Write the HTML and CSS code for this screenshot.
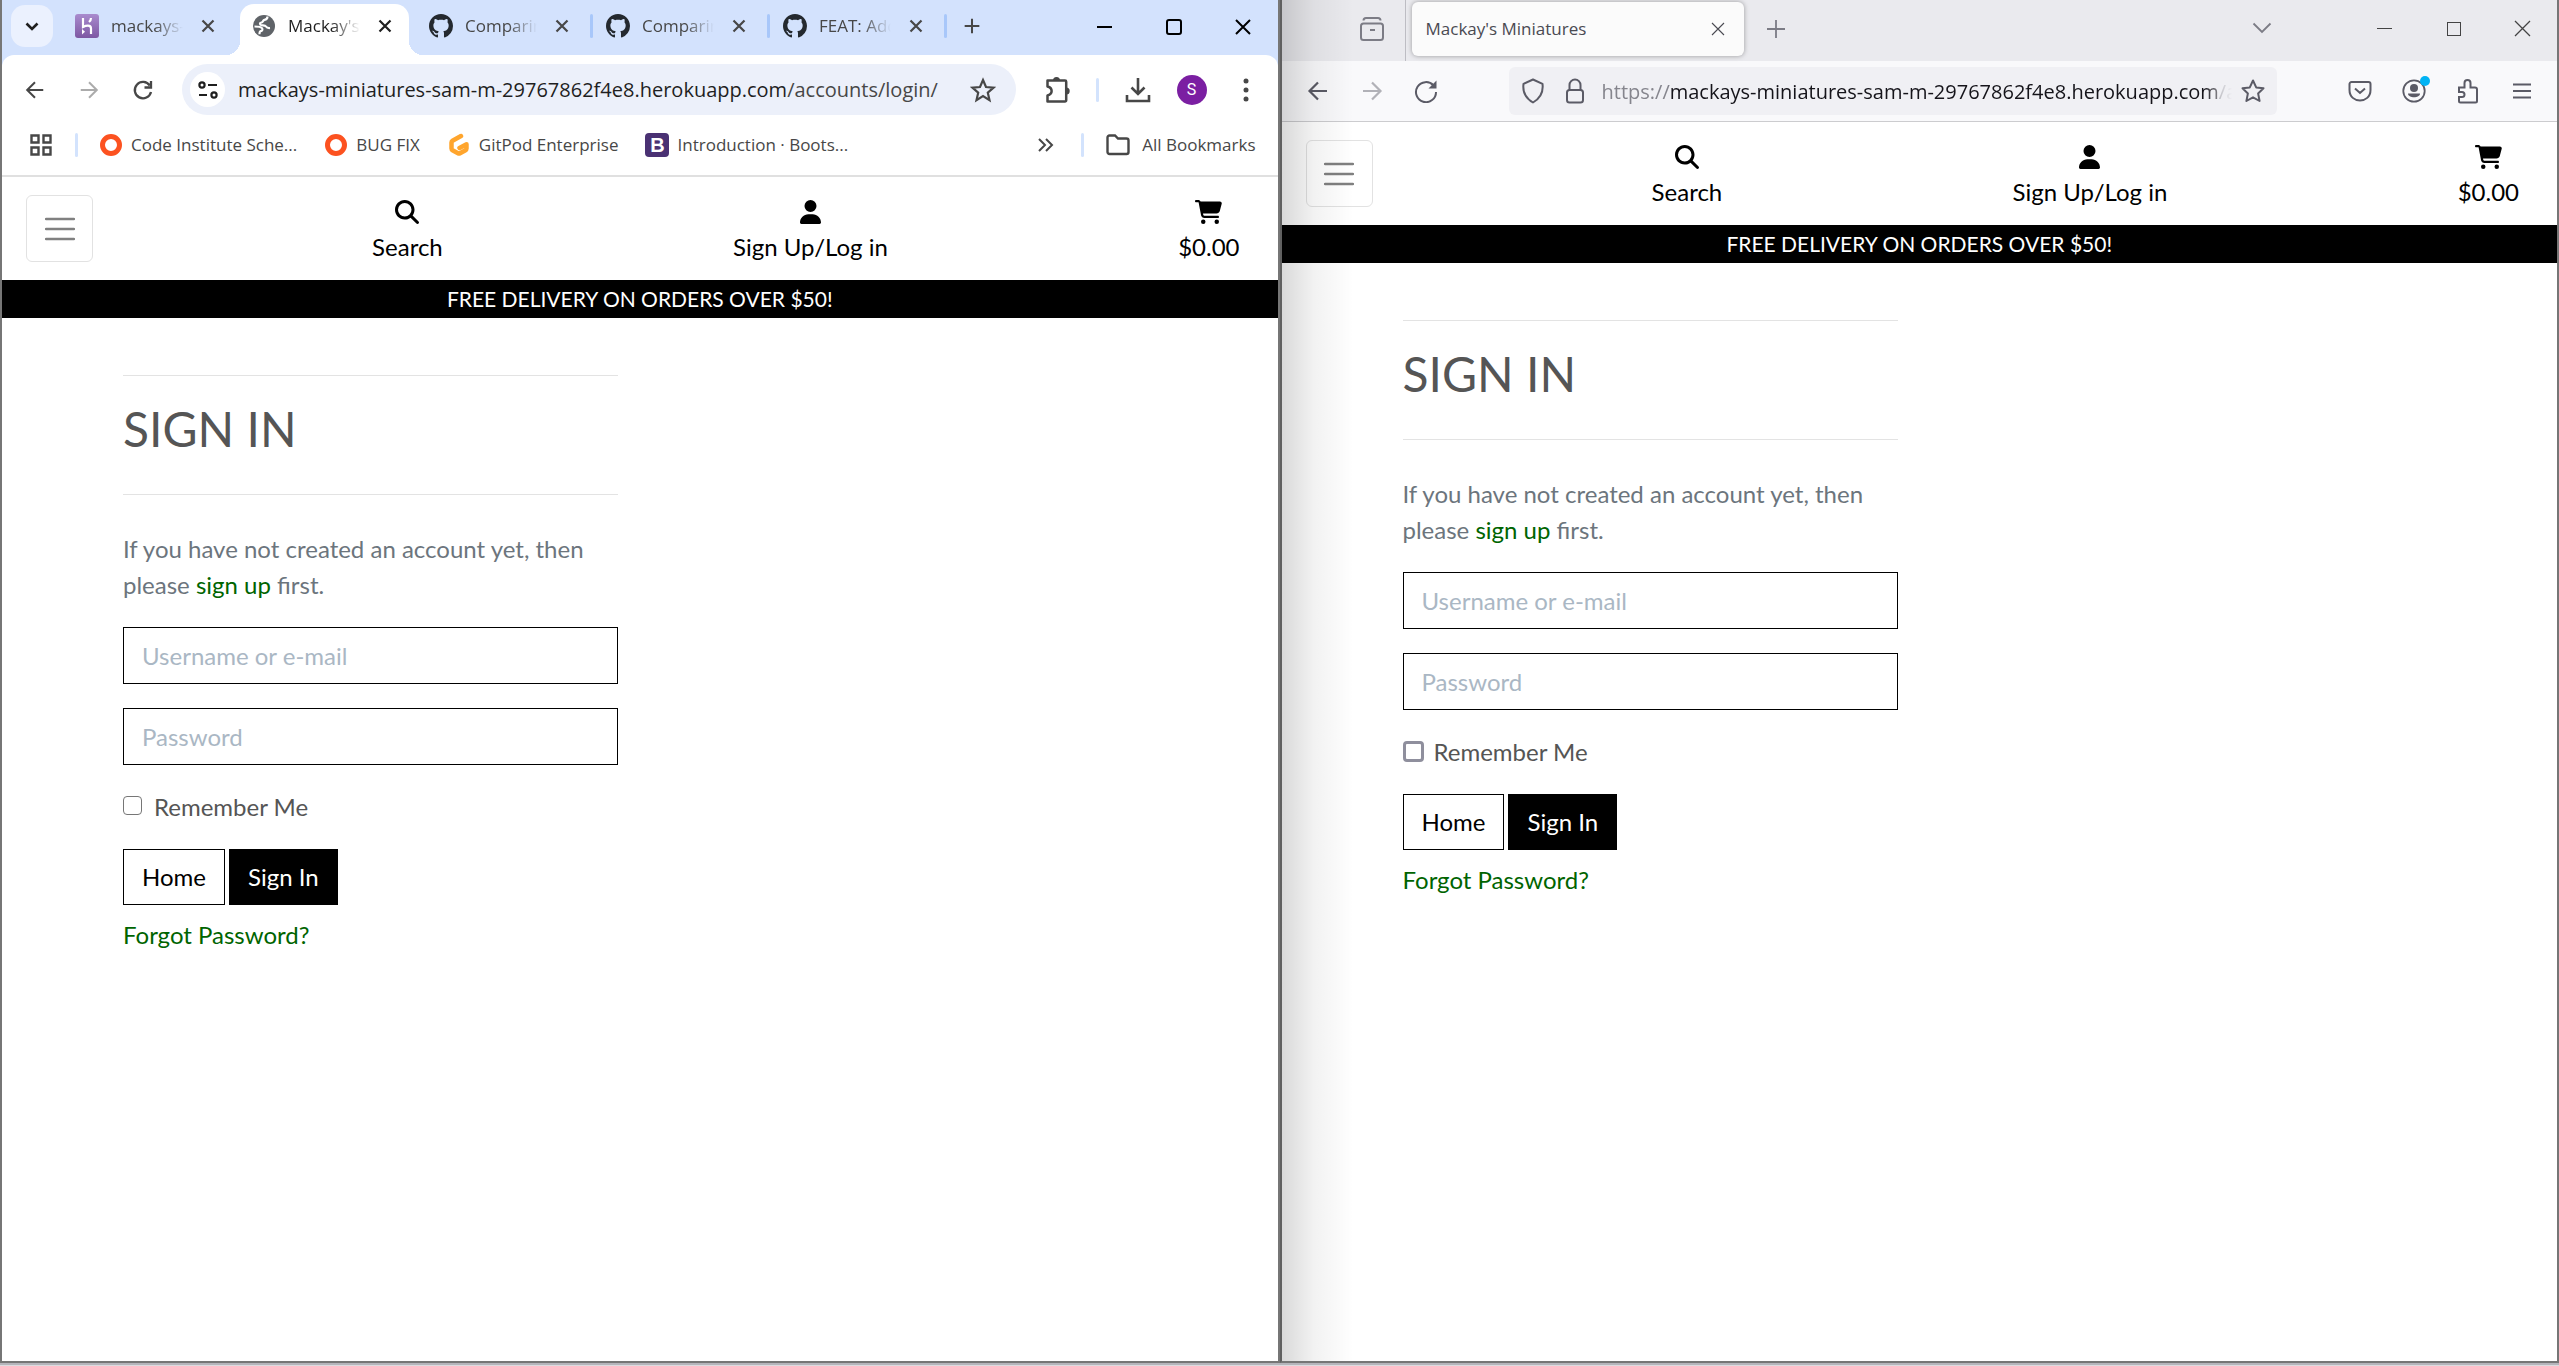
FILE: index.html
```html
<!DOCTYPE html>
<html lang="en">
<head>
<meta charset="utf-8">
<title>Mackay's Miniatures</title>
<link rel="stylesheet" href="styles.css">
</head>
<body>
<svg class="sprite" aria-hidden="true">
  <symbol id="close" viewBox="0 0 24 24"><path d="M6 6l12 12M18 6L6 18" fill="none" stroke="currentColor" stroke-width="2.4"/></symbol>
  <symbol id="close-thin" viewBox="0 0 24 24"><path d="M4 4l16 16M20 4L4 20" fill="none" stroke="currentColor" stroke-width="1.5"/></symbol>
  <symbol id="plus" viewBox="0 0 24 24"><path d="M12 4v16M4 12h16" fill="none" stroke="currentColor" stroke-width="2.2"/></symbol>
  <symbol id="github" viewBox="0 0 16 16"><path fill="#24292f" d="M8 0C3.58 0 0 3.58 0 8c0 3.54 2.29 6.53 5.47 7.59.4.07.55-.17.55-.38 0-.19-.01-.82-.01-1.49-2.01.37-2.53-.49-2.69-.94-.09-.23-.48-.94-.82-1.13-.28-.15-.68-.52-.01-.53.63-.01 1.08.58 1.23.82.72 1.21 1.87.87 2.33.66.07-.52.28-.87.51-1.07-1.78-.2-3.64-.89-3.64-3.95 0-.87.31-1.59.82-2.15-.08-.2-.36-1.02.08-2.12 0 0 .67-.21 2.2.82.64-.18 1.32-.27 2-.27s1.36.09 2 .27c1.53-1.04 2.2-.82 2.2-.82.44 1.1.16 1.92.08 2.12.51.56.82 1.27.82 2.15 0 3.07-1.87 3.75-3.65 3.95.29.25.54.73.54 1.48 0 1.07-.01 1.93-.01 2.2 0 .21.15.46.55.38A8.01 8.01 0 0 0 16 8c0-4.42-3.58-8-8-8z"/></symbol>
  <symbol id="back" viewBox="0 0 24 24"><path d="M21 12H4M12 3.5L3.5 12l8.500 8.500" fill="none" stroke="currentColor" stroke-width="2.2"/></symbol>
  <symbol id="forward" viewBox="0 0 24 24"><path d="M3 12h17M12 3.500L20.500 12 12 20.500" fill="none" stroke="currentColor" stroke-width="2.200"/></symbol>
  <symbol id="ring" viewBox="0 0 24 24"><circle cx="12" cy="12" r="8.500" fill="#fff" stroke="#fc5220" stroke-width="5"/></symbol>
  <symbol id="search" viewBox="0 0 512 512"><path d="M416 208c0 45.9-14.9 88.3-40 122.7L502.600 457.400c12.500 12.500 12.500 32.800 0 45.300s-32.800 12.500-45.300 0L330.700 376c-34.400 25.200-76.800 40-122.700 40C93.100 416 0 322.900 0 208S93.100 0 208 0S416 93.100 416 208zM208 352a144 144 0 1 0 0-288 144 144 0 1 0 0 288z"/></symbol>
  <symbol id="user" viewBox="0 0 448 512"><path d="M224 256A128 128 0 1 0 224 0a128 128 0 1 0 0 256zm-45.700 48C79.800 304 0 383.800 0 482.300C0 498.700 13.300 512 29.700 512H418.300c16.400 0 29.700-13.300 29.700-29.700C448 383.800 368.200 304 269.700 304H178.300z"/></symbol>
  <symbol id="cart" viewBox="0 0 576 512"><path d="M0 24C0 10.700 10.700 0 24 0H69.500c22 0 41.500 12.800 50.600 32h411c26.300 0 45.500 25 38.600 50.400l-41 152.300c-8.500 31.400-37 53.300-69.500 53.300H170.700l5.400 28.500c2.200 11.300 12.100 19.500 23.600 19.500H488c13.300 0 24 10.700 24 24s-10.700 24-24 24H199.700c-34.600 0-64.300-24.600-70.700-58.500L77.400 54.500c-.7-3.800-4-6.500-7.900-6.500H24C10.700 48 0 37.300 0 24zM128 464a48 48 0 1 1 96 0 48 48 0 1 1 -96 0zm336-48a48 48 0 1 1 0 96 48 48 0 1 1 0-96z"/></symbol>
  <symbol id="bars" viewBox="0 0 30 30"><path d="M1 5h28M1 15h28M1 25h28" stroke="#808080" stroke-width="2.500" stroke-linecap="round"/></symbol>
</svg>

<div class="desktop">
  <section class="window chrome" aria-label="Chrome window">
    <header class="browser">
      <div class="strip">
        <button class="tab-search" aria-label="Search tabs"><svg width="24" height="24" viewBox="0 0 24 24"><path d="M6.500 9.500L12 15l5.500-5.500" fill="none" stroke="#1f1f1f" stroke-width="2.600"/></svg></button>
        <div class="tabs">
          <div class="tab">
            <svg class="favicon" viewBox="0 0 24 24"><defs><linearGradient id="hk" x2="0" y2="1"><stop offset="0" stop-color="#a98bce"/><stop offset="1" stop-color="#7d58a3"/></linearGradient></defs><rect width="24" height="24" rx="3" fill="url(#hk)"/><path d="M8 4v9c3-1.500 8-2.500 8 1.500V20M16 4c0 1.500-.8 3-2 4" fill="none" stroke="#fff" stroke-width="2.200"/><path d="M7 15l3 2.700L7 20.500z" fill="#fff"/></svg>
            <span class="tab-title">mackays-miniatures</span>
            <button class="icon-sm" aria-label="Close tab"><svg width="22" height="22"><use href="#close"/></svg></button>
          </div>
          <div class="tab active">
            <svg class="favicon" viewBox="0 0 24 24"><circle cx="12" cy="12" r="11" fill="#5f6368"/><path d="M15.500 2.500c0 2.500-1 3-3 3.300-1.800.3-1.300 2.500-3 2.700-1.500.2-2 1.200-1 2.300 1 1 4.500.2 5.500 1.700.8 1.300 2 1.700 4 1.500M2.500 12.500c3 0 6.500.3 7.500 1.700 1 1.300.2 2.800-1.300 3-1 .2-1.200 1.500-1.200 3" fill="none" stroke="#fff" stroke-width="2.200"/></svg>
            <span class="tab-title">Mackay's Miniatures</span>
            <button class="icon-sm" aria-label="Close tab"><svg width="22" height="22"><use href="#close"/></svg></button>
          </div>
          <div class="tab split">
            <svg class="favicon"><use href="#github"/></svg>
            <span class="tab-title">Comparing changes</span>
            <button class="icon-sm" aria-label="Close tab"><svg width="22" height="22"><use href="#close"/></svg></button>
          </div>
          <div class="tab split">
            <svg class="favicon"><use href="#github"/></svg>
            <span class="tab-title">Comparing changes</span>
            <button class="icon-sm" aria-label="Close tab"><svg width="22" height="22"><use href="#close"/></svg></button>
          </div>
          <div class="tab split">
            <svg class="favicon"><use href="#github"/></svg>
            <span class="tab-title">FEAT: Add feature</span>
            <button class="icon-sm" aria-label="Close tab"><svg width="22" height="22"><use href="#close"/></svg></button>
          </div>
        </div>
        <button class="icon-sm new-tab" aria-label="New tab"><svg width="22" height="22"><use href="#plus"/></svg></button>
        <div class="controls">
          <button aria-label="Minimize"><svg width="16" height="16" viewBox="0 0 16 16"><path d="M0 8h15" stroke="#000" stroke-width="2"/></svg></button>
          <button aria-label="Maximize"><svg width="16" height="16" viewBox="0 0 16 16"><rect x="1" y="1" width="14" height="14" rx="2" fill="none" stroke="#000" stroke-width="2"/></svg></button>
          <button aria-label="Close"><svg width="16" height="16" viewBox="0 0 16 16"><path d="M1 1l14 14M15 1L1 15" stroke="#000" stroke-width="2"/></svg></button>
        </div>
      </div>
      <div class="panel">
        <div class="toolbar">
          <button class="tool" aria-label="Back"><svg width="22" height="22"><use href="#back"/></svg></button>
          <button class="tool dim" aria-label="Forward"><svg width="22" height="22"><use href="#forward"/></svg></button>
          <button class="tool" aria-label="Reload"><svg width="24" height="24" viewBox="0 0 24 24"><path d="M18.800 7.500A8.200 8.200 0 1 0 20 14M20 3v6.500h-6.500" fill="none" stroke="currentColor" stroke-width="2.300"/></svg></button>
          <div class="omnibox">
            <button class="site-info" aria-label="Site information"><svg width="20" height="20" viewBox="0 0 20 20" fill="none" stroke="#1f1f1f" stroke-width="2.200"><circle cx="4" cy="5" r="2.600"/><path d="M10 5h9M1 15h8"/><circle cx="16" cy="15" r="2.600"/></svg></button>
            <div class="address" role="textbox" aria-label="Address">mackays-miniatures-sam-m-29767862f4e8.herokuapp.com<span class="path">/accounts/login/</span></div>
            <button class="star" aria-label="Bookmark"><svg width="26" height="26" viewBox="0 0 26 26"><path d="M13 3l3 7 7.500.7-5.700 5 1.700 7.400-6.500-4-6.500 4 1.700-7.400-5.700-5L10 10z" fill="none" stroke="#474747" stroke-width="2.200"/></svg></button>
          </div>
          <button class="tool puzzle" aria-label="Extensions"><svg width="26" height="28" viewBox="0 0 26 28"><path d="M4 4.500h17a1.200 1.200 0 0 1 1.200 1.200v18.600a1.200 1.200 0 0 1-1.200 1.200H3.500v-6c5.500-1.500 5.500-7.500 0-9V4.500z" fill="none" stroke="currentColor" stroke-width="2.500" stroke-linejoin="round"/><path d="M9 4.500a3.500 3.500 0 0 1 7 0zM22.200 11.500a3.500 3.500 0 0 1 0 7z" fill="currentColor"/></svg></button>
          <i class="bar"></i>
          <button class="tool" aria-label="Downloads"><svg width="26" height="26" viewBox="0 0 26 26"><path d="M13 1v15M6.500 10.500L13 17l6.500-6.500M2 18v6h22v-6" fill="none" stroke="currentColor" stroke-width="2.600"/></svg></button>
          <button class="tool" aria-label="Profile"><span class="avatar">S</span></button>
          <button class="tool" aria-label="Menu"><svg width="6" height="24" viewBox="0 0 6 24" fill="currentColor"><circle cx="3" cy="3" r="2.500"/><circle cx="3" cy="12" r="2.500"/><circle cx="3" cy="21" r="2.500"/></svg></button>
        </div>
        <nav class="bookmarks" aria-label="Bookmarks">
          <button class="apps" aria-label="Apps"><svg width="22" height="22" viewBox="0 0 22 22"><path d="M1.500 1.500h7v7h-7zM13.500 1.500h7v7h-7zM1.500 13.500h7v7h-7zM13.500 13.500h7v7h-7z" fill="none" stroke="#474747" stroke-width="2.400"/></svg></button>
          <i class="bar"></i>
          <a href="#"><svg width="24" height="24"><use href="#ring"/></svg>Code Institute Sche...</a>
          <a href="#"><svg width="24" height="24"><use href="#ring"/></svg>BUG FIX</a>
          <a href="#"><svg width="24" height="24" viewBox="0 0 24 24"><path d="M14 3L5.500 7.800a2 2 0 0 0-1 1.700v6a2 2 0 0 0 1 1.700l5.500 3.100a2 2 0 0 0 2 0l5.500-3.100a2 2 0 0 0 1-1.700v-4.200L12.500 15" fill="none" stroke="#ffa52d" stroke-width="4.500" stroke-linecap="round" stroke-linejoin="round"/></svg>GitPod Enterprise</a>
          <a href="#"><span class="bs">B</span>Introduction · Boots...</a>
          <button class="more" aria-label="More bookmarks"><svg width="16" height="14" viewBox="0 0 16 14"><path d="M1 1l6 6-6 6M8 1l6 6-6 6" fill="none" stroke="#474747" stroke-width="2"/></svg></button>
          <i class="bar"></i>
          <a href="#"><svg width="24" height="22" viewBox="0 0 24 22"><path d="M1.500 3.500a2 2 0 0 1 2-2H9l3 3h8.500a2 2 0 0 1 2 2v11.500a2 2 0 0 1-2 2h-17a2 2 0 0 1-2-2z" fill="none" stroke="#474747" stroke-width="2.400"/></svg>All Bookmarks</a>
        </nav>
      </div>
    </header>
    <main class="site">
      <nav class="site-nav" aria-label="Site">
        <button class="toggler" aria-label="Toggle navigation"><svg width="30" height="30"><use href="#bars"/></svg></button>
        <ul class="links">
          <li><a href="#"><svg width="24" height="24"><use href="#search"/></svg>Search</a></li>
          <li><a href="#"><svg width="21" height="24"><use href="#user"/></svg>Sign Up/Log in</a></li>
          <li><a href="#"><svg width="27" height="24"><use href="#cart"/></svg>$0.00</a></li>
        </ul>
      </nav>
      <p class="banner">FREE DELIVERY ON ORDERS OVER $50!</p>
      <form class="signin">
        <hr>
        <h1>SIGN IN</h1>
        <hr>
        <p class="intro">If you have not created an account yet, then please <a href="#">sign up</a> first.</p>
        <input class="field" type="text" placeholder="Username or e-mail" aria-label="Username or e-mail">
        <input class="field" type="password" placeholder="Password" aria-label="Password">
        <label class="remember"><input type="checkbox">Remember Me</label>
        <div class="actions">
          <a class="btn" href="#">Home</a>
          <button class="btn primary" type="button">Sign In</button>
        </div>
        <a class="forgot" href="#">Forgot Password?</a>
      </form>
    </main>
  </section>

  <section class="window firefox" aria-label="Firefox window">
    <header class="browser">
      <div class="strip">
        <button class="archive" aria-label="Recent browsing"><svg width="24" height="24" viewBox="0 0 24 24"><path d="M3.500 3.500c0-1.500 1-2.500 2.500-2.500h12c1.500 0 2.500 1 2.500 2.500M10 13h5" fill="none" stroke="currentColor" stroke-width="2"/><rect x="1" y="6.500" width="22" height="16.500" rx="2.500" fill="none" stroke="currentColor" stroke-width="2"/></svg></button>
        <div class="tab active">
          <span class="tab-title">Mackay's Miniatures</span>
          <button class="icon-sm" aria-label="Close tab"><svg width="18" height="18"><use href="#close-thin"/></svg></button>
        </div>
        <button class="icon-sm new-tab" aria-label="New tab"><svg width="20" height="20" viewBox="0 0 20 20"><path d="M10 1v18M1 10h18" stroke="currentColor" stroke-width="1.800"/></svg></button>
        <button class="list" aria-label="List all tabs"><svg width="20" height="12" viewBox="0 0 20 12"><path d="M1.500 1.500L10 10l8.500-8.500" fill="none" stroke="currentColor" stroke-width="1.800"/></svg></button>
        <div class="controls">
          <button aria-label="Minimize"><svg width="16" height="16" viewBox="0 0 16 16"><path d="M0 7.500h15" stroke="#444" stroke-width="1"/></svg></button>
          <button aria-label="Maximize"><svg width="16" height="16" viewBox="0 0 16 16"><rect x="1.500" y="1.500" width="13" height="13" fill="none" stroke="#444" stroke-width="1"/></svg></button>
          <button aria-label="Close"><svg width="17" height="17" viewBox="0 0 17 17"><path d="M1 1l15 15M16 1L1 16" stroke="#444" stroke-width="1.300"/></svg></button>
        </div>
      </div>
      <div class="toolbar">
        <button class="tool" aria-label="Back"><svg width="24" height="24"><use href="#back"/></svg></button>
        <button class="tool dim" aria-label="Forward"><svg width="24" height="24"><use href="#forward"/></svg></button>
        <button class="tool" aria-label="Reload"><svg width="24" height="24" viewBox="0 0 24 24"><path d="M19.500 6.500A10 10 0 1 0 22 13" fill="none" stroke="currentColor" stroke-width="2"/><path d="M22.500 1.500v8h-8z" fill="currentColor"/></svg></button>
        <div class="urlbar">
          <svg width="24" height="26" viewBox="0 0 24 26"><path d="M12 1.500l9.500 4.300c1 8-2 14.500-9.500 18.700C4.500 20.300 1.500 13.800 2.500 5.800z" fill="none" stroke="#5b5b66" stroke-width="2" stroke-linejoin="round"/></svg>
          <svg width="20" height="26" viewBox="0 0 20 26"><path d="M4.500 12V7a5.500 5.500 0 0 1 11 0v5" fill="none" stroke="#5b5b66" stroke-width="2"/><rect x="2" y="12" width="16" height="12.500" rx="2.500" fill="none" stroke="#5b5b66" stroke-width="2"/></svg>
          <div class="address" role="textbox" aria-label="Address"><span class="path">https://</span>mackays-miniatures-sam-m-29767862f4e8.herokuapp.com<span class="path">/accounts/login/</span></div>
          <button class="star" aria-label="Bookmark"><svg width="26" height="26" viewBox="0 0 26 26"><path d="M13 2.500l3.200 6.900 7.300.9-5.400 5.100 1.500 7.600L13 19.300 6.400 23l1.500-7.600-5.400-5.100 7.300-.9z" fill="none" stroke="#5b5b66" stroke-width="2" stroke-linejoin="round"/></svg></button>
        </div>
        <button class="tool" aria-label="Pocket"><svg width="24" height="22" viewBox="0 0 24 22"><path d="M3.500 2h17a2 2 0 0 1 2 2v6c0 14-21 14-21 0V4a2 2 0 0 1 2-2zM7 8.500l5 4.500 5-4.500" fill="none" stroke="currentColor" stroke-width="2"/></svg></button>
        <button class="tool account" aria-label="Account"><svg width="24" height="24" viewBox="0 0 24 24"><circle cx="12" cy="12" r="10.700" fill="none" stroke="currentColor" stroke-width="1.800"/><circle cx="12" cy="9" r="4" fill="currentColor"/><path d="M6 14.500h12c0 5-12 5-12 0z" fill="currentColor"/></svg></button>
        <button class="tool" aria-label="Extensions"><svg width="22" height="26" viewBox="0 0 22 26"><path d="M2 9.500h5.500V5a3 3 0 0 1 6 0v4.500H18a2 2 0 0 1 2 2V23a1.500 1.500 0 0 1-1.500 1.500H3.500A1.500 1.500 0 0 1 2 23v-4h3a2.500 2.500 0 0 0 0-5H2z" fill="none" stroke="currentColor" stroke-width="2"/></svg></button>
        <button class="tool" aria-label="Menu"><svg width="18" height="16" viewBox="0 0 18 16"><path d="M0 1.500h18M0 8h18M0 14.500h18" stroke="currentColor" stroke-width="2"/></svg></button>
      </div>
    </header>
    <main class="site">
      <nav class="site-nav" aria-label="Site">
        <button class="toggler" aria-label="Toggle navigation"><svg width="30" height="30"><use href="#bars"/></svg></button>
        <ul class="links">
          <li><a href="#"><svg width="24" height="24"><use href="#search"/></svg>Search</a></li>
          <li><a href="#"><svg width="21" height="24"><use href="#user"/></svg>Sign Up/Log in</a></li>
          <li><a href="#"><svg width="27" height="24"><use href="#cart"/></svg>$0.00</a></li>
        </ul>
      </nav>
      <p class="banner">FREE DELIVERY ON ORDERS OVER $50!</p>
      <form class="signin">
        <hr>
        <h1>SIGN IN</h1>
        <hr>
        <p class="intro">If you have not created an account yet, then please <a href="#">sign up</a> first.</p>
        <input class="field" type="text" placeholder="Username or e-mail" aria-label="Username or e-mail">
        <input class="field" type="password" placeholder="Password" aria-label="Password">
        <label class="remember"><input type="checkbox">Remember Me</label>
        <div class="actions">
          <a class="btn" href="#">Home</a>
          <button class="btn primary" type="button">Sign In</button>
        </div>
        <a class="forgot" href="#">Forgot Password?</a>
      </form>
    </main>
  </section>
</div>
</body>
</html>
```

FILE: styles.css
```css
* { box-sizing: border-box; }

body {
  margin: 0;
  background: #dcdce0;
  font-family: "Open Sans", sans-serif;
}

button {
  display: flex;
  align-items: center;
  justify-content: center;
  padding: 0;
  border: 0;
  background: none;
  color: inherit;
  font: inherit;
}

a { color: inherit; text-decoration: none; }
svg { display: block; flex: none; }
.sprite { position: absolute; width: 0; height: 0; }

.desktop {
  display: flex;
  min-height: 100vh;
  padding-bottom: 3px;
}

.window {
  flex: 1;
  min-width: 0;
  display: flex;
  flex-direction: column;
  border: 2px solid #767676;
  border-top: 0;
  background: #fff;
  box-shadow: 0 2px 0 #b5b5bb;
}

/* Browser chrome shared by both windows */
.strip, .toolbar, .controls, .tabs, .tab { display: flex; align-items: center; }
.controls button { width: 69px; height: 50px; }
.icon-sm { width: 24px; height: 24px; flex: none; }
.tool { width: 54px; height: 48px; flex: none; }
.address { flex: 1; min-width: 0; overflow: hidden; white-space: nowrap; }
.tab-title { overflow: hidden; white-space: nowrap; }

.chrome .browser {
  border-bottom: 2px solid #e0e0e0;
  background: #d3e2fd;
  color: #474747;
}
.chrome .strip { height: 55px; }
.tab-search {
  width: 42px;
  height: 42px;
  margin: 0 10px 4px 9px;
  border-radius: 14px;
  background: #ebf1fe;
  flex: none;
}
.tabs { align-self: stretch; }
.chrome .tab {
  position: relative;
  width: 177px;
  height: 51px;
  padding: 0 0 8px 12px;
  align-self: flex-end;
  font-size: 17px;
}
.chrome .favicon { width: 24px; height: 24px; margin-right: 12px; }
.chrome .tab-title {
  width: 72px;
  margin-right: 13px;
  mask-image: linear-gradient(to right, #000 60%, transparent);
}
.chrome .tab.active {
  width: 169px;
  margin-right: 8px;
  border-radius: 14px 14px 0 0;
  background: #fff;
  color: #1f1f1f;
}
.tab.active::before, .tab.active::after {
  content: "";
  position: absolute;
  bottom: 0;
  width: 14px;
  height: 14px;
}
.chrome .tab.active::before { right: 100%; background: radial-gradient(circle at 0 0, transparent 14px, #fff 14px); }
.chrome .tab.active::after { left: 100%; background: radial-gradient(circle at 100% 0, transparent 14px, #fff 14px); }
.firefox .tab.active::before, .firefox .tab.active::after { display: none; }
.tab.split::after {
  content: "";
  position: absolute;
  top: 10px;
  right: 1px;
  width: 3px;
  height: 24px;
  border-radius: 2px;
  background: #a8c7fa;
}
.new-tab { margin: 0 0 4px 12px; }
.chrome .controls { margin: 0 0 2px auto; }

.panel { border-radius: 12px 12px 0 0; background: #fff; }
.chrome .toolbar { height: 69px; padding: 0 5px 0 6px; }
.dim { opacity: .45; }
.omnibox {
  flex: 1;
  min-width: 0;
  display: flex;
  align-items: center;
  height: 51px;
  margin: 0 14px 0 12px;
  padding: 0 20px 0 8px;
  border-radius: 26px;
  background: #ecf0fa;
  color: #1f1f1f;
  font-size: 20px;
}
.site-info { width: 35px; height: 35px; margin-right: 13px; border-radius: 50%; background: #fff; flex: none; }
.omnibox .path { color: #474747; }
.bar { width: 3px; height: 24px; border-radius: 2px; background: #d3e3fd; flex: none; }
.toolbar .bar { margin: 0 12px; }
.avatar {
  width: 30px;
  height: 30px;
  border-radius: 50%;
  background: #7b1fa2;
  color: #fff;
  font: 16px/30px Roboto, sans-serif;
  text-align: center;
}
.bookmarks {
  display: flex;
  align-items: center;
  height: 51px;
  padding: 0 22px 10px 28px;
  font-size: 17px;
}
.bookmarks a { display: flex; align-items: center; gap: 8px; margin-left: 27px; white-space: nowrap; }
.bookmarks .apps { margin-right: 23px; }
.bookmarks .bar + a { margin-left: 21px; }
.bookmarks .more { margin: 0 27px 0 auto; }
.bookmarks .more ~ a { gap: 12px; margin-left: 22px; }
.bs {
  width: 24px;
  height: 24px;
  border-radius: 4px;
  background: #4a3173;
  color: #fff;
  font: bold 20px/24px "Liberation Sans", sans-serif;
  text-align: center;
}

.firefox { position: relative; border-left-color: #606060; }
.firefox::before {
  content: "";
  position: absolute;
  inset: 0 auto 0 0;
  width: 72px;
  background: linear-gradient(to right, rgba(0, 0, 0, .15), rgba(0, 0, 0, .05) 32px, rgba(0, 0, 0, 0));
  pointer-events: none;
}
.firefox .browser { border-bottom: 1px solid #cccccf; background: #f9f9fb; color: #5b5b66; }
.firefox .strip { height: 61px; background: #eaeaee; color: #7c7c85; }
.archive { width: 124px; height: 61px; padding: 0 21px 4px 0; border-right: 1px solid #bdbdc3; justify-content: flex-end; flex: none; }
.firefox .tab {
  justify-content: space-between;
  width: 332px;
  height: 54px;
  margin: 0 8px 4px 6px;
  padding: 0 14px;
  border-radius: 6px;
  background: #fbfbfb;
  box-shadow: 0 0 5px rgba(0, 0, 0, .35);
  color: #4a4a52;
  font-size: 17px;
}
.list { margin: 0 78px 6px auto; }
.firefox .controls { margin: 0 0 4px; }
.firefox .toolbar { height: 60px; padding: 0 8px 0 9px; }
.urlbar {
  flex: 1;
  min-width: 0;
  display: flex;
  align-items: center;
  height: 48px;
  margin: 0 56px;
  padding: 0 11px 0 12px;
  border-radius: 6px;
  background: #f0f0f4;
  color: #15141a;
  font-size: 20px;
}
.urlbar svg + svg { margin: 0 17px 0 20px; }
.urlbar .path { color: #85858d; }
.urlbar .address { margin-right: 8px; mask-image: linear-gradient(to left, transparent, #000 28px); }
.account { position: relative; }
.account::after {
  content: "";
  position: absolute;
  top: 9px;
  right: 11px;
  width: 10px;
  height: 10px;
  border-radius: 50%;
  background: #00b3f4;
}

/* Shop page */
.site { font: 24px/36px Lato, sans-serif; color: #555; }
.site-nav { display: flex; align-items: center; height: 103px; padding: 0 38px 0 24px; color: #000; }
.toggler { width: 67px; height: 67px; border: 1px solid #e2e2e2; border-radius: 6px; flex: none; }
.links {
  flex: 1;
  display: flex;
  justify-content: space-between;
  margin: 0;
  padding: 0 0 0 23%;
  list-style: none;
}
.links a { display: flex; flex-direction: column; align-items: center; }
.links svg { margin: 7px 0 5px; fill: #000; }
.banner { margin: 0; background: #000; color: #fff; font-size: 21px; line-height: 38px; text-align: center; }

.signin { width: 495px; margin: 57px 0 0 121px; }
.signin hr { margin: 0; border: 0; border-top: 1px solid #e3e3e3; }
.signin h1 { margin: 24px 0 36px; font-size: 48px; font-weight: 400; line-height: 58px; }
.intro { margin: 36px 0 24px; color: #6c757d; }
.intro a, .forgot { color: #006400; }
.field {
  display: block;
  width: 100%;
  height: 57px;
  margin: 0 0 24px;
  padding: 0 18px;
  border: 1px solid #000;
  border-radius: 0;
  font: inherit;
}
.field::placeholder { color: #aab7c4; opacity: 1; }
.remember { display: flex; align-items: center; margin-bottom: 24px; }
.remember input {
  appearance: none;
  width: 19px;
  height: 19px;
  margin: 0 12px 4px 0;
  border: 1px solid #767676;
  border-radius: 4px;
  background: #fff;
}
.firefox .remember input {
  width: 21px;
  height: 21px;
  margin: 0 10px 2px 0;
  border: 3px solid #8f8f9d;
}
.actions { display: flex; gap: 4px; margin-bottom: 12px; }
.btn { height: 56px; padding: 0 18px; border: 1px solid #000; color: #000; line-height: 54px; }
.primary { background: #000; color: #fff; }
.forgot { display: inline-block; }
```
